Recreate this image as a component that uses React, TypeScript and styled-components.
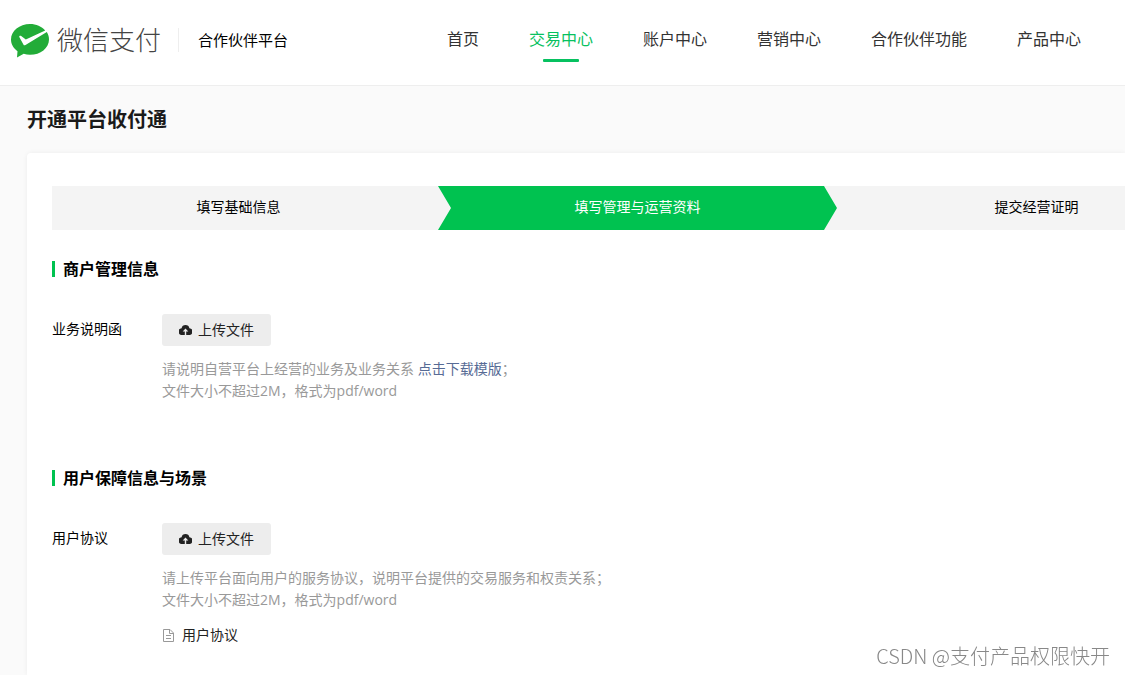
import React from 'react';
import styled, { createGlobalStyle, css } from 'styled-components';

const GlobalStyle = createGlobalStyle`
  *, *::before, *::after { box-sizing: border-box; }
  body {
    margin: 0;
    background: #fafafa;
    color: #000;
    font-family: "Open Sans", "Noto Sans CJK SC", sans-serif;
    font-size: 14px;
    line-height: 22px;
  }
  #root { overflow: hidden; }
`;

const Page = styled.div`
  min-height: 100vh;
  display: flex;
  flex-direction: column;
`;

const Header = styled.header`
  display: flex;
  align-items: center;
  height: 86px;
  padding: 0 11px 6px;
  background: #fff;
  border-bottom: 1px solid #eee;
  white-space: nowrap;
`;

const Brand = styled.a`
  display: flex;
  align-items: center;
  flex-shrink: 0;
  color: #444;
  text-decoration: none;
`;

const BrandName = styled.span`
  margin-left: 8px;
  padding-bottom: 2px;
  font-family: "Noto Sans CJK SC", sans-serif;
  font-size: 26px;
  font-weight: 300;
  line-height: 36px;
`;

const Platform = styled.span`
  display: flex;
  align-items: center;
  height: 24px;
  margin-left: 17px;
  padding-left: 19px;
  border-left: 1px solid #eee;
  color: #000;
  font-size: 15px;
`;

const Nav = styled.nav`
  display: flex;
  gap: 50px;
  margin-left: 159px;
  padding-bottom: 2px;
`;

const NavLink = styled.a<{ $active?: boolean }>`
  position: relative;
  flex-shrink: 0;
  color: ${p => (p.$active ? '#07c160' : '#333')};
  font-size: 16px;
  line-height: 24px;
  text-decoration: none;
  ${p =>
    p.$active &&
    css`
      &::after {
        content: '';
        position: absolute;
        left: 50%;
        bottom: -11px;
        width: 36px;
        height: 3px;
        margin-left: -18px;
        border-radius: 1px;
        background: #07c160;
      }
    `}
`;

const Main = styled.main`
  flex: 1;
  display: flex;
  flex-direction: column;
  padding: 20px 0 0 27px;
`;

const PageTitle = styled.h1`
  margin: 0 0 19px;
  color: #1a1a1a;
  font-size: 20px;
  font-weight: 700;
  line-height: 28px;
`;

const Card = styled.div`
  flex: 1;
  padding: 33px 0 28px 25px;
  background: #fff;
  border-radius: 4px 0 0 0;
  box-shadow: 0 0 5px rgba(0, 0, 0, 0.06);
`;

const Steps = styled.ol`
  display: flex;
  height: 44px;
  margin: 0;
  padding: 0;
  background: #f4f4f4;
  list-style: none;
  overflow: hidden;
`;

const Step = styled.li<{ $active?: boolean }>`
  flex: 1 0 399px;
  line-height: 42px;
  text-align: center;
  &:first-child {
    flex-basis: 386px;
    padding-right: 13px;
  }
  ${p =>
    p.$active &&
    css`
      background: #00c250;
      color: #fff;
      clip-path: polygon(0 0, calc(100% - 13px) 0, 100% 50%, calc(100% - 13px) 100%, 0 100%, 13px 50%);
    `}
`;

const Section = styled.section`
  margin-top: 27px;
  & + & {
    margin-top: 64px;
  }
`;

const SectionTitle = styled.h2`
  display: flex;
  align-items: center;
  gap: 8px;
  margin: 0 0 33px;
  font-size: 16px;
  font-weight: 700;
  line-height: 24px;
  &::before {
    content: '';
    width: 3px;
    height: 16px;
    background: #00c250;
  }
`;

const Field = styled.div`
  display: flex;
`;

const Label = styled.label`
  flex: 0 0 110px;
  line-height: 30px;
`;

const UploadButton = styled.button`
  display: flex;
  align-items: center;
  gap: 6px;
  height: 32px;
  margin-bottom: 12px;
  padding: 0 17px;
  border: 0;
  border-radius: 3px;
  background: #ededed;
  color: #222;
  font: inherit;
  cursor: pointer;
`;

const Hint = styled.p`
  margin: 0;
  color: #999;
  line-height: 22px;
`;

const TemplateLink = styled.a`
  color: #576b95;
  text-decoration: none;
`;

const FileLink = styled.a`
  display: flex;
  align-items: center;
  gap: 8px;
  margin-top: 13px;
  padding-left: 1px;
  color: #222;
  text-decoration: none;
`;

const Watermark = styled.div`
  position: fixed;
  right: 15px;
  bottom: 5px;
  color: #888;
  font-family: "Noto Sans CJK SC", sans-serif;
  font-size: 20px;
  font-weight: 300;
  line-height: 28px;
`;

const PayLogo = () => (
  <svg width="38" height="36" viewBox="0 -2 38 36" aria-hidden="true">
    <path
      d="M19 0C8.500 0 0 6.900 0 15.500c0 4.700 2.500 8.800 6.500 11.700L6 33.500l6.700-3.700c2 .7 4.100 1 6.300 1 10.500 0 19-6.900 19-15.400 0-2.700-.8-5.200-2.200-7.300L14.500 21c-1 .5-1.700.3-2.100-.6L8.300 13c-.3-1 .9-1.700 1.900-1l4.600 3.400L34.200 6.400C30.700 2.500 25.200 0 19 0z"
      fill="#22ac38"
    />
  </svg>
);

const CloudIcon = () => (
  <svg width="13" height="10" viewBox="0 0 13 10" aria-hidden="true">
    <path
      d="M6.500 0a4 4 0 0 0-3.900 3.200A3.400 3.400 0 0 0 3.400 10h6.200a3.400 3.400 0 0 0 .8-6.800A4 4 0 0 0 6.500 0z"
      fill="#222"
    />
    <path d="M6.500 3.400 3.700 6.500h2.100V10h1.400V6.500h2.100z" fill="#ededed" />
  </svg>
);

const FileIcon = () => (
  <svg width="11" height="13" viewBox="0 0 11 13" fill="none" stroke="#999" aria-hidden="true">
    <path d="M.5.5H7L10.500 4v8.500H.5zM6.500.5v4h4M3 6.500h5M3 9.500h5" />
  </svg>
);

const navItems = ['首页', '交易中心', '账户中心', '营销中心', '合作伙伴功能', '产品中心'];
const steps = ['填写基础信息', '填写管理与运营资料', '提交经营证明'];
const fileRule = '文件大小不超过2M\uff0c格式为pdf/word';
const agreementHint =
  '请上传平台面向用户的服务协议\uff0c说明平台提供的交易服务和权责关系\uff1b';

type UploadFieldProps = { id: string; label: string; children: React.ReactNode };

const UploadField = ({ id, label, children }: UploadFieldProps) => (
  <Field>
    <Label htmlFor={id}>{label}</Label>
    <div>
      <UploadButton id={id} type="button">
        <CloudIcon />
        上传文件
      </UploadButton>
      {children}
    </div>
  </Field>
);

export default function App() {
  return (
    <Page lang="zh-CN">
      <GlobalStyle />
      <Header>
        <Brand href="#">
          <PayLogo />
          <BrandName>微信支付</BrandName>
          <Platform>合作伙伴平台</Platform>
        </Brand>
        <Nav>
          {navItems.map((item, i) => (
            <NavLink key={item} href="#" $active={i === 1}>
              {item}
            </NavLink>
          ))}
        </Nav>
      </Header>
      <Main>
        <PageTitle>开通平台收付通</PageTitle>
        <Card>
          <Steps>
            {steps.map((step, i) => (
              <Step key={step} $active={i === 1}>
                {step}
              </Step>
            ))}
          </Steps>
          <Section>
            <SectionTitle>商户管理信息</SectionTitle>
            <UploadField id="business-letter" label="业务说明函">
              <Hint>
                请说明自营平台上经营的业务及业务关系 <TemplateLink href="#">点击下载模版</TemplateLink>
                {'\uff1b'}
              </Hint>
              <Hint>{fileRule}</Hint>
            </UploadField>
          </Section>
          <Section>
            <SectionTitle>用户保障信息与场景</SectionTitle>
            <UploadField id="user-agreement" label="用户协议">
              <Hint>{agreementHint}</Hint>
              <Hint>{fileRule}</Hint>
              <FileLink href="#">
                <FileIcon />
                用户协议
              </FileLink>
            </UploadField>
          </Section>
        </Card>
      </Main>
      <Watermark>CSDN @支付产品权限快开</Watermark>
    </Page>
  );
}
